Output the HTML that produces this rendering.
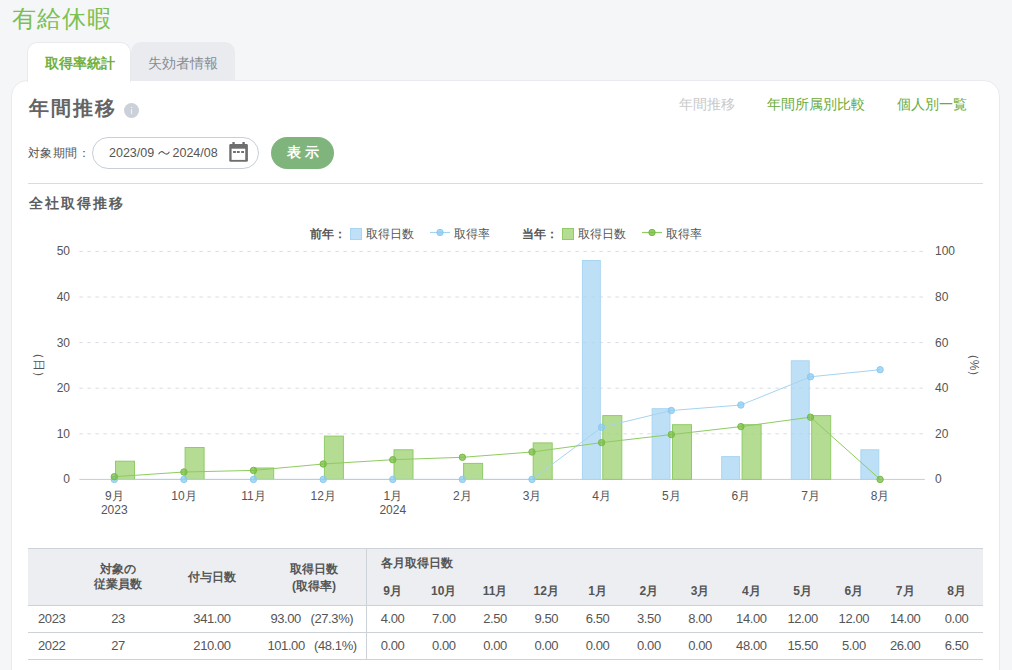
<!DOCTYPE html>
<html><head><meta charset="utf-8"><style>
*{margin:0;padding:0;box-sizing:border-box}
html,body{width:1012px;height:670px;overflow:hidden;background:#f5f6f8;font-family:"Liberation Sans",sans-serif;color:#555}
.a{position:absolute;white-space:nowrap}
.title{left:12px;top:4px;font-size:24px;color:#7cc052;font-weight:300;line-height:30px;letter-spacing:1px}
.tab1{left:27px;top:42px;width:104px;height:39.5px;background:#fff;border:1px solid #e8eaee;border-bottom:none;border-radius:10px 10px 0 0}
.tab2{left:131px;top:42px;width:104px;height:39px;background:#e9ebef;border-radius:10px 10px 0 0}
.tabt1{left:28px;top:54px;width:103px;text-align:center;font-size:14px;font-weight:bold;color:#70b040;line-height:18px}
.tabt2{left:131px;top:53.5px;width:104px;text-align:center;font-size:14px;color:#868c94;line-height:18px}
.card{left:11px;top:80px;width:989px;height:620px;background:#fff;border:1px solid #e8eaee;border-radius:16px}
.h1{left:28.5px;top:96px;font-size:20px;font-weight:bold;letter-spacing:2px;color:#646464;line-height:24px}
.info{left:123.5px;top:102.5px;width:15px;height:15px;border-radius:50%;background:#cbd1d9}
.nav{top:95px;font-size:14px;line-height:18px;color:#6aab3a}
.lbl{left:28px;top:145px;font-size:12px;line-height:16px;color:#555;letter-spacing:0.4px}
.inp{left:92px;top:137px;width:167px;height:32px;border:1px solid #c8cfd8;border-radius:16px;background:#fff}
.inpt{top:144.5px;font-size:12.5px;line-height:16px;color:#555}
.btn{left:271px;top:137px;width:63px;height:32px;border-radius:16px;background:#7fb57c;color:#fff;font-size:13.5px;font-weight:bold;text-align:center;line-height:31.5px;letter-spacing:4px;padding-left:4px}
.hr{left:28px;top:183px;width:955px;height:1px;background:#d7dce2}
.h2{left:29px;top:194px;font-size:14px;font-weight:bold;letter-spacing:2px;color:#5e5e5e;line-height:18px}
.leg{top:226px;font-size:12px;line-height:16px;color:#555}
.xl{position:absolute;top:489px;width:60px;text-align:center;font-size:12px;line-height:14px;color:#555}
.yl{position:absolute;left:30px;width:40px;text-align:right;font-size:12px;line-height:16px;color:#555}
.yr{position:absolute;left:935px;font-size:12px;line-height:16px;color:#555}
.th{position:absolute;text-align:center;font-size:12px;font-weight:bold;line-height:15px;color:#555}
.td{position:absolute;text-align:center;font-size:13px;line-height:16px;color:#555;letter-spacing:-0.4px}
</style></head><body>
<div class="a title">有給休暇</div>
<div class="a tab2"></div>
<div class="a card"></div>
<div class="a tab1"></div>
<div class="a tabt1">取得率統計</div>
<div class="a tabt2">失効者情報</div>
<div class="a h1">年間推移</div>
<div class="a info"><svg width="15" height="15" style="position:absolute;left:0;top:0"><rect x="6.9" y="3.8" width="1.2" height="1.2" fill="#eef0f3"/><rect x="6.9" y="6.2" width="1.2" height="5" fill="#eef0f3"/></svg></div>
<div class="a nav" style="left:679px;color:#c9c9c9">年間推移</div>
<div class="a nav" style="left:767px">年間所属別比較</div>
<div class="a nav" style="left:897px">個人別一覧</div>
<div class="a lbl">対象期間：</div>
<div class="a inp"></div>
<div class="a inpt" style="left:109px">2023/09</div><svg class="a" style="left:157.5px;top:149px" width="12" height="8" viewBox="0 0 12 8"><path d="M0.6 5.2 C2 2.2 4 2 6 3.8 S10 5.8 11.4 2.8" fill="none" stroke="#555" stroke-width="1.1"/></svg><div class="a inpt" style="left:172.5px">2024/08</div>
<svg class="a" style="left:229px;top:142px" width="20" height="20" viewBox="0 0 20 20"><rect x="0.25" y="2.1" width="18.65" height="17.7" rx="1.3" fill="#6e6e6e"/><rect x="2.6" y="6.7" width="13.65" height="11.2" fill="#fff"/><rect x="3.4" y="0" width="2.3" height="3" fill="#6e6e6e"/><rect x="13.4" y="0" width="2.4" height="3" fill="#6e6e6e"/><rect x="4.1" y="9" width="2.8" height="2" fill="#6e6e6e"/><rect x="7.9" y="9" width="2.8" height="2" fill="#6e6e6e"/><rect x="12.2" y="9" width="2.8" height="2" fill="#6e6e6e"/></svg>
<div class="a btn">表示</div>
<div class="a hr"></div>
<div class="a h2">全社取得推移</div>
<div class="a leg" style="left:310px;font-weight:bold">前年：</div>
<div class="a" style="left:350px;top:228px;width:12px;height:12px;background:#bfe0f6;border:1px solid #a9d5f1"></div>
<div class="a leg" style="left:366px">取得日数</div>
<svg class="a" style="left:430px;top:227px" width="20" height="12"><line x1="0" y1="5.5" x2="20" y2="5.5" stroke="#a5d4f0" stroke-width="1.2"/><circle cx="10" cy="5.5" r="3.2" fill="rgba(140,203,240,0.8)" stroke="#8ccbf0" stroke-width="1"/></svg>
<div class="a leg" style="left:454px">取得率</div>
<div class="a leg" style="left:522px;font-weight:bold">当年：</div>
<div class="a" style="left:562px;top:228px;width:12px;height:12px;background:#b5dc93;border:1px solid #90cb68"></div>
<div class="a leg" style="left:578px">取得日数</div>
<svg class="a" style="left:642px;top:227px" width="20" height="12"><line x1="0" y1="5.5" x2="20" y2="5.5" stroke="#8fcb62" stroke-width="1.2"/><circle cx="10" cy="5.5" r="3.2" fill="rgba(121,189,69,0.8)" stroke="#76bb42" stroke-width="1"/></svg>
<div class="a leg" style="left:666px">取得率</div>
<svg class="a" style="left:0;top:0" width="1012" height="670">
<line x1="79.4" y1="433.8" x2="924.8" y2="433.8" stroke="#d6dee5" stroke-dasharray="3.5 4.5"/>
<line x1="79.4" y1="388.2" x2="924.8" y2="388.2" stroke="#d6dee5" stroke-dasharray="3.5 4.5"/>
<line x1="79.4" y1="342.6" x2="924.8" y2="342.6" stroke="#d6dee5" stroke-dasharray="3.5 4.5"/>
<line x1="79.4" y1="297.0" x2="924.8" y2="297.0" stroke="#d6dee5" stroke-dasharray="3.5 4.5"/>
<line x1="79.4" y1="251.4" x2="924.8" y2="251.4" stroke="#d6dee5" stroke-dasharray="3.5 4.5"/>
<line x1="79.4" y1="479.4" x2="924.8" y2="479.4" stroke="#c5ccd4"/>
<rect x="115.5" y="461.2" width="19" height="18.2" fill="rgba(162,211,120,0.8)" stroke="#90cb68" stroke-width="1"/>
<rect x="185.1" y="447.5" width="19" height="31.9" fill="rgba(162,211,120,0.8)" stroke="#90cb68" stroke-width="1"/>
<rect x="254.7" y="468.0" width="19" height="11.4" fill="rgba(162,211,120,0.8)" stroke="#90cb68" stroke-width="1"/>
<rect x="324.4" y="436.1" width="19" height="43.3" fill="rgba(162,211,120,0.8)" stroke="#90cb68" stroke-width="1"/>
<rect x="394.0" y="449.8" width="19" height="29.6" fill="rgba(162,211,120,0.8)" stroke="#90cb68" stroke-width="1"/>
<rect x="463.6" y="463.4" width="19" height="16.0" fill="rgba(162,211,120,0.8)" stroke="#90cb68" stroke-width="1"/>
<rect x="533.2" y="442.9" width="19" height="36.5" fill="rgba(162,211,120,0.8)" stroke="#90cb68" stroke-width="1"/>
<rect x="582.4" y="260.5" width="17.9" height="218.9" fill="rgba(168,214,243,0.75)" stroke="#a9d5f1" stroke-width="1"/>
<rect x="602.8" y="415.6" width="19" height="63.8" fill="rgba(162,211,120,0.8)" stroke="#90cb68" stroke-width="1"/>
<rect x="652.1" y="408.7" width="17.9" height="70.7" fill="rgba(168,214,243,0.75)" stroke="#a9d5f1" stroke-width="1"/>
<rect x="672.5" y="424.7" width="19" height="54.7" fill="rgba(162,211,120,0.8)" stroke="#90cb68" stroke-width="1"/>
<rect x="721.7" y="456.6" width="17.9" height="22.8" fill="rgba(168,214,243,0.75)" stroke="#a9d5f1" stroke-width="1"/>
<rect x="742.1" y="424.7" width="19" height="54.7" fill="rgba(162,211,120,0.8)" stroke="#90cb68" stroke-width="1"/>
<rect x="791.3" y="360.8" width="17.9" height="118.6" fill="rgba(168,214,243,0.75)" stroke="#a9d5f1" stroke-width="1"/>
<rect x="811.7" y="415.6" width="19" height="63.8" fill="rgba(162,211,120,0.8)" stroke="#90cb68" stroke-width="1"/>
<rect x="860.9" y="449.8" width="17.9" height="29.6" fill="rgba(168,214,243,0.75)" stroke="#a9d5f1" stroke-width="1"/>
<polyline points="114.3,479.4 183.9,479.4 253.5,479.4 323.2,479.4 392.8,479.4 462.4,479.4 532.0,479.4 601.6,427.3 671.3,410.5 740.9,405.0 810.5,376.8 880.1,369.7" fill="none" stroke="#a5d4f0" stroke-width="1"/>
<polyline points="114.3,476.7 183.9,472.0 253.5,470.4 323.2,464.0 392.8,459.7 462.4,457.3 532.0,452.0 601.6,442.6 671.3,434.6 740.9,426.6 810.5,417.2 880.1,479.4" fill="none" stroke="#8fcb62" stroke-width="1"/>
<circle cx="114.3" cy="479.4" r="3.2" fill="rgba(140,203,240,0.75)" stroke="#8ccbf0" stroke-width="1"/>
<circle cx="183.9" cy="479.4" r="3.2" fill="rgba(140,203,240,0.75)" stroke="#8ccbf0" stroke-width="1"/>
<circle cx="253.5" cy="479.4" r="3.2" fill="rgba(140,203,240,0.75)" stroke="#8ccbf0" stroke-width="1"/>
<circle cx="323.2" cy="479.4" r="3.2" fill="rgba(140,203,240,0.75)" stroke="#8ccbf0" stroke-width="1"/>
<circle cx="392.8" cy="479.4" r="3.2" fill="rgba(140,203,240,0.75)" stroke="#8ccbf0" stroke-width="1"/>
<circle cx="462.4" cy="479.4" r="3.2" fill="rgba(140,203,240,0.75)" stroke="#8ccbf0" stroke-width="1"/>
<circle cx="532.0" cy="479.4" r="3.2" fill="rgba(140,203,240,0.75)" stroke="#8ccbf0" stroke-width="1"/>
<circle cx="601.6" cy="427.3" r="3.2" fill="rgba(140,203,240,0.75)" stroke="#8ccbf0" stroke-width="1"/>
<circle cx="671.3" cy="410.5" r="3.2" fill="rgba(140,203,240,0.75)" stroke="#8ccbf0" stroke-width="1"/>
<circle cx="740.9" cy="405.0" r="3.2" fill="rgba(140,203,240,0.75)" stroke="#8ccbf0" stroke-width="1"/>
<circle cx="810.5" cy="376.8" r="3.2" fill="rgba(140,203,240,0.75)" stroke="#8ccbf0" stroke-width="1"/>
<circle cx="880.1" cy="369.7" r="3.2" fill="rgba(140,203,240,0.75)" stroke="#8ccbf0" stroke-width="1"/>
<circle cx="114.3" cy="476.7" r="3.2" fill="rgba(121,189,69,0.75)" stroke="#76bb42" stroke-width="1"/>
<circle cx="183.9" cy="472.0" r="3.2" fill="rgba(121,189,69,0.75)" stroke="#76bb42" stroke-width="1"/>
<circle cx="253.5" cy="470.4" r="3.2" fill="rgba(121,189,69,0.75)" stroke="#76bb42" stroke-width="1"/>
<circle cx="323.2" cy="464.0" r="3.2" fill="rgba(121,189,69,0.75)" stroke="#76bb42" stroke-width="1"/>
<circle cx="392.8" cy="459.7" r="3.2" fill="rgba(121,189,69,0.75)" stroke="#76bb42" stroke-width="1"/>
<circle cx="462.4" cy="457.3" r="3.2" fill="rgba(121,189,69,0.75)" stroke="#76bb42" stroke-width="1"/>
<circle cx="532.0" cy="452.0" r="3.2" fill="rgba(121,189,69,0.75)" stroke="#76bb42" stroke-width="1"/>
<circle cx="601.6" cy="442.6" r="3.2" fill="rgba(121,189,69,0.75)" stroke="#76bb42" stroke-width="1"/>
<circle cx="671.3" cy="434.6" r="3.2" fill="rgba(121,189,69,0.75)" stroke="#76bb42" stroke-width="1"/>
<circle cx="740.9" cy="426.6" r="3.2" fill="rgba(121,189,69,0.75)" stroke="#76bb42" stroke-width="1"/>
<circle cx="810.5" cy="417.2" r="3.2" fill="rgba(121,189,69,0.75)" stroke="#76bb42" stroke-width="1"/>
<circle cx="880.1" cy="479.4" r="3.2" fill="rgba(121,189,69,0.75)" stroke="#76bb42" stroke-width="1"/>
</svg>
<div class="xl" style="left:84.3px">9月</div><div class="xl" style="left:153.9px">10月</div><div class="xl" style="left:223.5px">11月</div><div class="xl" style="left:293.2px">12月</div><div class="xl" style="left:362.8px">1月</div><div class="xl" style="left:432.4px">2月</div><div class="xl" style="left:502.0px">3月</div><div class="xl" style="left:571.6px">4月</div><div class="xl" style="left:641.3px">5月</div><div class="xl" style="left:710.9px">6月</div><div class="xl" style="left:780.5px">7月</div><div class="xl" style="left:850.1px">8月</div><div class="xl" style="left:84.3px;top:503px">2023</div><div class="xl" style="left:362.8px;top:503px">2024</div><div class="yl" style="top:471.4px">0</div><div class="yr" style="top:471.4px">0</div><div class="yl" style="top:425.8px">10</div><div class="yr" style="top:425.8px">20</div><div class="yl" style="top:380.2px">20</div><div class="yr" style="top:380.2px">40</div><div class="yl" style="top:334.6px">30</div><div class="yr" style="top:334.6px">60</div><div class="yl" style="top:289.0px">40</div><div class="yr" style="top:289.0px">80</div><div class="yl" style="top:243.4px">50</div><div class="yr" style="top:243.4px">100</div>
<div class="a" style="left:20.5px;top:365px;font-size:12px;line-height:14px;transform:translate(0,-50%) rotate(90deg);transform-origin:center;color:#555">（日）</div>
<div class="a" style="left:956.5px;top:365px;font-size:12px;line-height:14px;transform:translate(0,-50%) rotate(90deg);transform-origin:center;color:#555">（%）</div>
<div class="a" style="left:28px;top:548px;width:955px;height:57.5px;background:#eceef2;border-top:1px solid #cdd2d9;border-bottom:1px solid #cdd2d9"></div>
<div class="a" style="left:28px;top:632px;width:955px;height:1px;background:#cdd2d9"></div>
<div class="a" style="left:28px;top:659px;width:955px;height:1px;background:#cdd2d9"></div>
<div class="a" style="left:366px;top:548px;width:1px;height:112px;background:#cdd2d9"></div>
<div class="th" style="left:78px;top:562px;width:80px">対象の<br>従業員数</div>
<div class="th" style="left:172px;top:570px;width:80px">付与日数</div>
<div class="th" style="left:274px;top:561px;width:80px;line-height:16.5px">取得日数<br>(取得率)</div>
<div class="th" style="left:381px;top:556px;text-align:left">各月取得日数</div>
<div class="td" style="left:38px;top:611px;text-align:left">2023</div>
<div class="td" style="left:38px;top:638px;text-align:left">2022</div>
<div class="td" style="left:78px;top:611px;width:80px">23</div>
<div class="td" style="left:78px;top:638px;width:80px">27</div>
<div class="td" style="left:172px;top:611px;width:80px">341.00</div>
<div class="td" style="left:172px;top:638px;width:80px">210.00</div>
<div class="td" style="left:270.4px;top:611px;text-align:left">93.00</div><div class="td" style="left:310.5px;top:611px;text-align:left">(27.3%)</div>
<div class="td" style="left:267.4px;top:638px;text-align:left">101.00</div><div class="td" style="left:314px;top:638px;text-align:left">(48.1%)</div>
<div class="th" style="left:367.5px;top:584px;width:50px">9月</div><div class="td" style="left:367.5px;top:611px;width:50px">4.00</div><div class="td" style="left:367.5px;top:638px;width:50px">0.00</div><div class="th" style="left:418.8px;top:584px;width:50px">10月</div><div class="td" style="left:418.8px;top:611px;width:50px">7.00</div><div class="td" style="left:418.8px;top:638px;width:50px">0.00</div><div class="th" style="left:470.0px;top:584px;width:50px">11月</div><div class="td" style="left:470.0px;top:611px;width:50px">2.50</div><div class="td" style="left:470.0px;top:638px;width:50px">0.00</div><div class="th" style="left:521.3px;top:584px;width:50px">12月</div><div class="td" style="left:521.3px;top:611px;width:50px">9.50</div><div class="td" style="left:521.3px;top:638px;width:50px">0.00</div><div class="th" style="left:572.6px;top:584px;width:50px">1月</div><div class="td" style="left:572.6px;top:611px;width:50px">6.50</div><div class="td" style="left:572.6px;top:638px;width:50px">0.00</div><div class="th" style="left:623.9px;top:584px;width:50px">2月</div><div class="td" style="left:623.9px;top:611px;width:50px">3.50</div><div class="td" style="left:623.9px;top:638px;width:50px">0.00</div><div class="th" style="left:675.1px;top:584px;width:50px">3月</div><div class="td" style="left:675.1px;top:611px;width:50px">8.00</div><div class="td" style="left:675.1px;top:638px;width:50px">0.00</div><div class="th" style="left:726.4px;top:584px;width:50px">4月</div><div class="td" style="left:726.4px;top:611px;width:50px">14.00</div><div class="td" style="left:726.4px;top:638px;width:50px">48.00</div><div class="th" style="left:777.7px;top:584px;width:50px">5月</div><div class="td" style="left:777.7px;top:611px;width:50px">12.00</div><div class="td" style="left:777.7px;top:638px;width:50px">15.50</div><div class="th" style="left:828.9px;top:584px;width:50px">6月</div><div class="td" style="left:828.9px;top:611px;width:50px">12.00</div><div class="td" style="left:828.9px;top:638px;width:50px">5.00</div><div class="th" style="left:880.2px;top:584px;width:50px">7月</div><div class="td" style="left:880.2px;top:611px;width:50px">14.00</div><div class="td" style="left:880.2px;top:638px;width:50px">26.00</div><div class="th" style="left:931.5px;top:584px;width:50px">8月</div><div class="td" style="left:931.5px;top:611px;width:50px">0.00</div><div class="td" style="left:931.5px;top:638px;width:50px">6.50</div>
</body></html>
